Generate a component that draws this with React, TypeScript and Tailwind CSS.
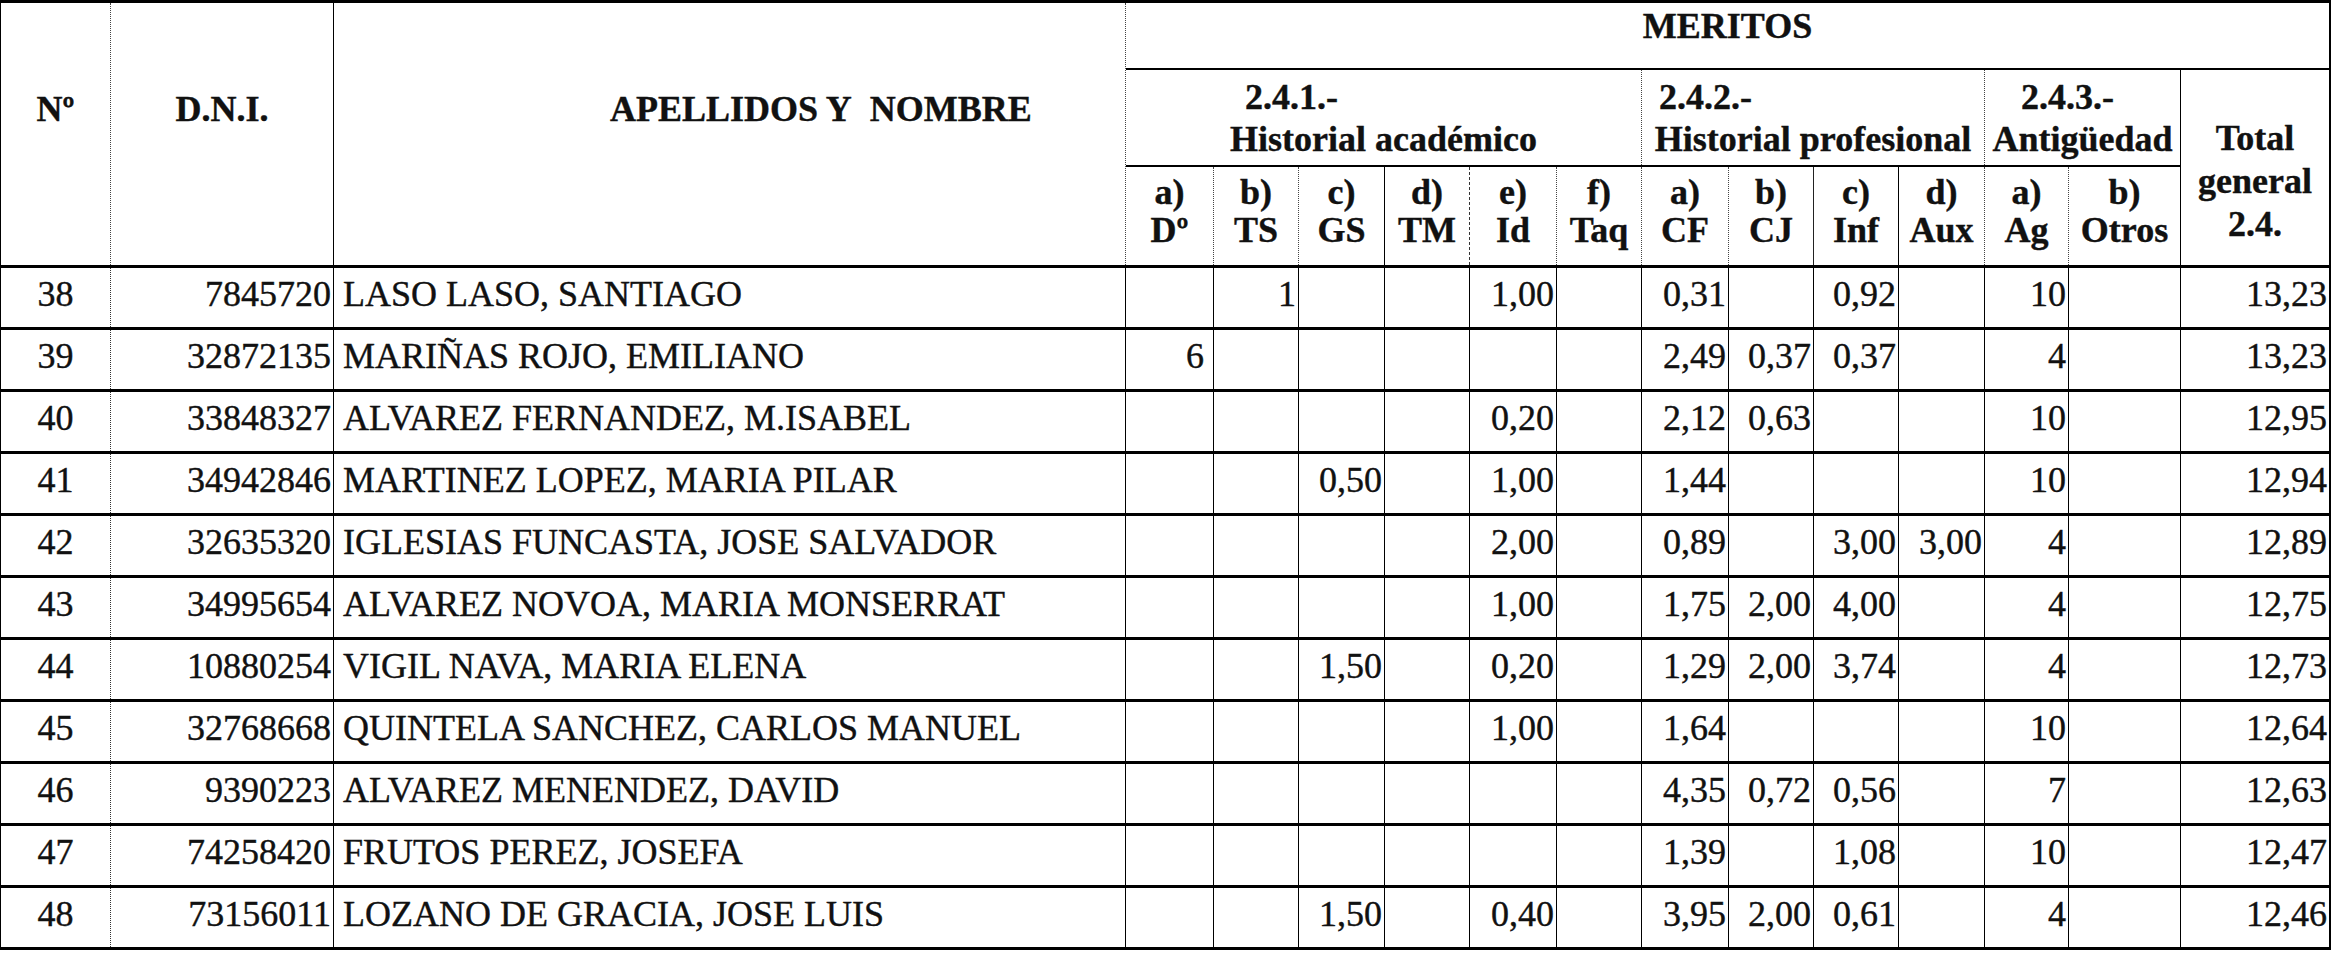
import React from "react";

type CellProps = { className?: string; inner?: string; children?: React.ReactNode };

function Cell({ className = "", inner = "", children }: CellProps) {
  return (
    <div className={`min-w-0 ${className}`}>
      <div className={`h-full whitespace-nowrap ${inner}`}>{children}</div>
    </div>
  );
}

const data: string[][] = [
  ["38", "7845720", "LASO LASO, SANTIAGO", "", "1", "", "", "1,00", "", "0,31", "", "0,92", "", "10", "", "13,23"],
  ["39", "32872135", "MARIÑAS ROJO, EMILIANO", "6", "", "", "", "", "", "2,49", "0,37", "0,37", "", "4", "", "13,23"],
  ["40", "33848327", "ALVAREZ FERNANDEZ, M.ISABEL", "", "", "", "", "0,20", "", "2,12", "0,63", "", "", "10", "", "12,95"],
  ["41", "34942846", "MARTINEZ LOPEZ, MARIA PILAR", "", "", "0,50", "", "1,00", "", "1,44", "", "", "", "10", "", "12,94"],
  ["42", "32635320", "IGLESIAS FUNCASTA, JOSE SALVADOR", "", "", "", "", "2,00", "", "0,89", "", "3,00", "3,00", "4", "", "12,89"],
  ["43", "34995654", "ALVAREZ NOVOA, MARIA MONSERRAT", "", "", "", "", "1,00", "", "1,75", "2,00", "4,00", "", "4", "", "12,75"],
  ["44", "10880254", "VIGIL NAVA, MARIA ELENA", "", "", "1,50", "", "0,20", "", "1,29", "2,00", "3,74", "", "4", "", "12,73"],
  ["45", "32768668", "QUINTELA SANCHEZ, CARLOS MANUEL", "", "", "", "", "1,00", "", "1,64", "", "", "", "10", "", "12,64"],
  ["46", "9390223", "ALVAREZ MENENDEZ, DAVID", "", "", "", "", "", "", "4,35", "0,72", "0,56", "", "7", "", "12,63"],
  ["47", "74258420", "FRUTOS PEREZ, JOSEFA", "", "", "", "", "", "", "1,39", "", "1,08", "", "10", "", "12,47"],
  ["48", "73156011", "LOZANO DE GRACIA, JOSE LUIS", "", "", "1,50", "", "0,40", "", "3,95", "2,00", "0,61", "", "4", "", "12,46"],
];

const subHeads: { a: string; b: string; line: string }[] = [
  { a: "a)", b: "Dº", line: "border-r border-dotted border-[#444]" },
  { a: "b)", b: "TS", line: "border-r border-dotted border-[#444]" },
  { a: "c)", b: "GS", line: "border-r border-solid border-black" },
  { a: "d)", b: "TM", line: "border-r border-dashed border-[#333]" },
  { a: "e)", b: "Id", line: "border-r border-dotted border-[#444]" },
  { a: "f)", b: "Taq", line: "border-r border-dotted border-[#444]" },
  { a: "a)", b: "CF", line: "border-r border-dotted border-[#444]" },
  { a: "b)", b: "CJ", line: "border-r border-solid border-[#222]" },
  { a: "c)", b: "Inf", line: "border-r border-solid border-black" },
  { a: "d)", b: "Aux", line: "border-r border-dotted border-[#444]" },
  { a: "a)", b: "Ag", line: "border-r border-dotted border-[#444]" },
  { a: "b)", b: "Otros", line: "border-r border-solid border-black" },
];

export default function App() {
  return (
    <div className="min-h-screen bg-white text-[#111]">
      <div className="grid w-max grid-cols-[110px_223px_792px_88px_85px_86px_85px_87px_85px_87px_85px_85px_86px_84px_112px_150px] grid-rows-[67px_97px_101px_repeat(11,62px)] border-t-[3px] border-l border-black text-[36px] leading-[42px] [font-family:Liberation_Serif,serif] [-webkit-text-stroke:0.4px_#111]">
        {/* Header */}
        <Cell
          className="col-start-1 row-start-1 row-span-3 border-b-[3px] border-black"
          inner="border-r border-dotted border-[#444] flex justify-center pt-[85px] font-bold"
        >
          Nº
        </Cell>
        <Cell
          className="col-start-2 row-start-1 row-span-3 border-b-[3px] border-black"
          inner="border-r border-solid border-black flex justify-center pt-[85px] font-bold"
        >
          D.N.I.
        </Cell>
        <Cell
          className="col-start-3 row-start-1 row-span-3 border-b-[3px] border-black"
          inner="border-r border-dotted border-[#444] pt-[85px] pl-[276px] font-bold"
        >
          APELLIDOS Y&nbsp; NOMBRE
        </Cell>
        <Cell
          className="col-start-4 col-span-13 row-start-1 border-b-2 border-black"
          inner="border-r-2 border-solid border-black flex justify-center pt-[2px] font-bold"
        >
          MERITOS
        </Cell>
        <Cell
          className="col-start-4 col-span-6 row-start-2 border-b-2 border-black"
          inner="border-r border-dotted border-[#444] flex flex-col justify-center font-bold"
        >
          <div className="pl-[119px]">2.4.1.-</div>
          <div className="text-center">Historial académico</div>
        </Cell>
        <Cell
          className="col-start-10 col-span-4 row-start-2 border-b-2 border-black"
          inner="border-r border-dotted border-[#444] flex flex-col justify-center font-bold"
        >
          <div className="pl-[17px]">2.4.2.-</div>
          <div className="text-center">Historial profesional</div>
        </Cell>
        <Cell
          className="col-start-14 col-span-2 row-start-2 border-b-2 border-black"
          inner="border-r border-solid border-black flex flex-col justify-center font-bold"
        >
          <div className="pl-[36px]">2.4.3.-</div>
          <div className="text-center">Antigüedad</div>
        </Cell>
        <Cell
          className="col-start-16 row-start-2 row-span-2 border-b-[3px] border-black"
          inner="border-r-2 border-solid border-black flex flex-col items-center pt-[47px] leading-[43px] font-bold"
        >
          <div>Total</div>
          <div>general</div>
          <div>2.4.</div>
        </Cell>
        {subHeads.map((s, i) => (
          <Cell
            key={i}
            className="row-start-3 border-b-[3px] border-black"
            inner={`${s.line} flex flex-col items-center justify-center pb-[10px] leading-[38px] font-bold`}
          >
            <div>{s.a}</div>
            <div>{s.b}</div>
          </Cell>
        ))}

        {/* Body */}
        {data.map((row, r) =>
          row.map((v, c) => {
            const last = c === 15;
            const align =
              c === 0
                ? "justify-center"
                : c === 2
                ? "justify-start pl-[9px]"
                : c === 3
                ? "justify-end pr-[9px]"
                : "justify-end pr-[2px]";
            const line = last
              ? "border-r-2 border-solid border-black"
              : c === 0
              ? "border-r border-dotted border-[#333]"
              : "border-r border-solid border-black";
            return (
              <Cell
                key={`${r}-${c}`}
                className="border-b-[3px] border-black"
                inner={`${line} flex items-start pt-[5px] ${align}`}
              >
                {v}
              </Cell>
            );
          })
        )}
      </div>
    </div>
  );
}
